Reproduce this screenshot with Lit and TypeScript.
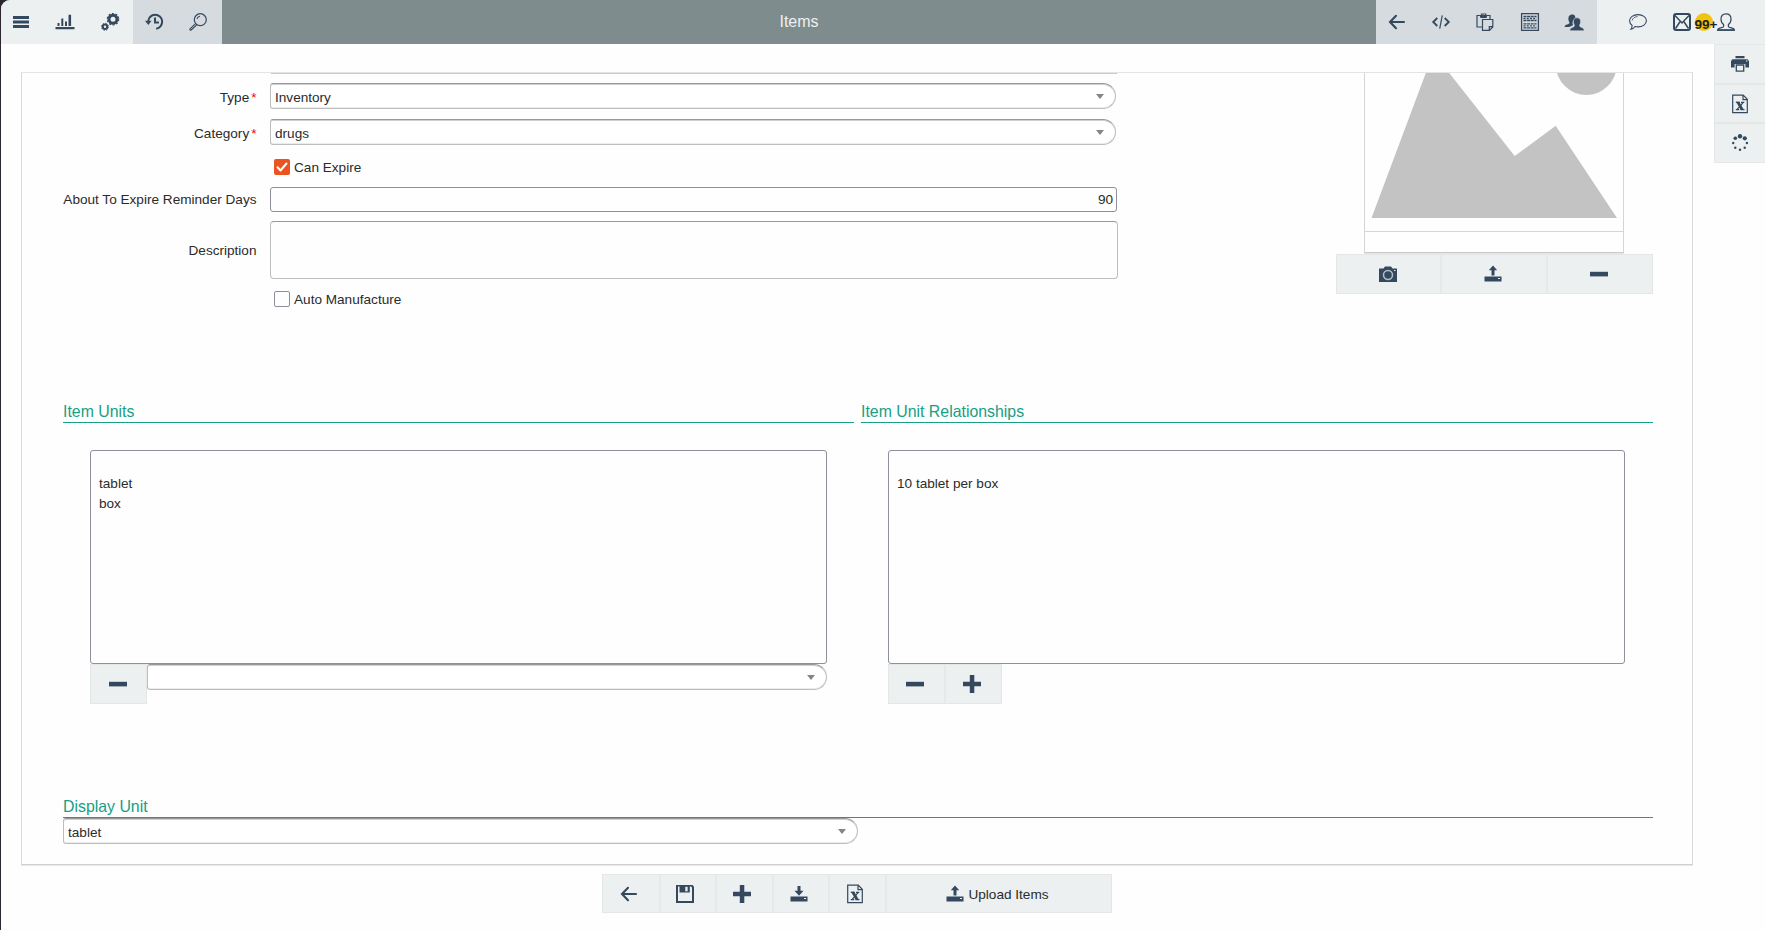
import { LitElement, html, css, svg, nothing } from "lit";
import { customElement, property } from "lit/decorators.js";

const DRIVE = svg`<path d="M.5 11.500h17v5H.5z"/><path d="M14 13.500h2" stroke="#ecf0f1" stroke-width="1"/>`;

const ICONS: Record<string, unknown> = {
  menu: svg`<path d="M1 3h16v3H1zM1 7.5h16v3H1zM1 12h16v3H1z"/>`,
  chart: svg`<path d="M-.5 14h19v2.2h-19zM1.5 10h2v3h-2zM5.3 5.500h2v7.500h-2zM9 8.500h2v4.500h-2zM12.500 1.800h2.600v11.200h-2.600z"/>`,
  gears: svg`<circle cx="12" cy="6.200" r="4" fill="none" stroke="currentColor" stroke-width="3"/><circle cx="12" cy="6.200" r="5.700" fill="none" stroke="currentColor" stroke-width="1.200" stroke-dasharray="2 1.580"/><circle cx="4" cy="13.800" r="2.200" fill="none" stroke="currentColor" stroke-width="2"/><circle cx="4" cy="13.800" r="3.500" fill="none" stroke="currentColor" stroke-width="1" stroke-dasharray="1.400 1.350"/>`,
  history: svg`<path d="M3.200 8.500a7 7 0 1 1 8 7.200" fill="none" stroke="currentColor" stroke-width="2" /><path d="M0 7.800h6.600L3.300 12zM9 4.500h2v4h3v2H9z"/>`,
  search: svg`<circle cx="11.300" cy="6.700" r="6" fill="none" stroke="currentColor" stroke-width="1.200"/><path d="M8 6a3.500 3.500 0 0 1 3-2.700M6.800 10.400L1 15.800c-.6.700.4 1.800 1.200 1.200L8 11.600" fill="none" stroke="currentColor" stroke-width="1.100"/>`,
  back: svg`<path d="M8 2.800L2 9l6 6.200M2.200 9H16" fill="none" stroke="currentColor" stroke-width="2.100" stroke-linecap="round"/>`,
  code: svg`<path d="M5.300 5L1.200 9l4.100 4M12.700 5l4.100 4-4.100 4" fill="none" stroke="currentColor" stroke-width="1.800"/><path d="M10.300 2.300L7.700 15.700" stroke="currentColor" stroke-width="1.200"/>`,
  paste: svg`<path d="M6 14H1V2.500h13v3.500M4.500 4.300h6M5.500 2.300V1h4.300v1.300M6.500 6.500h10.300V14l-3.300 3.300h-7zM16.500 13.600h-3.200v3.400" fill="none" stroke="currentColor" stroke-width="1.200"/><path d="M4 2h7v2.300H4z"/>`,
  table: svg`<path d="M.6.600h16.800v16.800H.6z" fill="none" stroke="currentColor" stroke-width="1.300"/><path d="M2.500 3.500h13M2.500 7.500h13M2.500 10.800h13M2.500 14.800h13" stroke="currentColor" stroke-width="1.300" stroke-dasharray="3 .6"/><path d="M2.500 5.500h13M2.500 12.800h13" stroke="currentColor" stroke-width="1.300" stroke-dasharray="2 1.200"/>`,
  users: svg`<path d="M7 1.500c3 0 3.600 2 3.300 4.500C8 6.500 7 9 8 12.300L4 14H-.3c0-3 4.800-2.200 4.800-4.500C2.700 7 2.800 1.500 7 1.500z" /><path d="M12 4.800c3 0 4 2.200 3.500 5-.2 1.200-.8 1.900-1 2.700 0 2.200 4.700 1.500 4.700 5.300H4.800c0-3.800 4.700-3.100 4.700-5.300-.3-.8-.8-1.500-1-2.700-.5-2.800.500-5 3.500-5z" stroke="#d6dbdf" stroke-width=".6"/>`,
  chat: svg`<path d="M9 1.600c4.700 0 8.400 2.700 8.400 6.100s-3.700 6.200-8.400 6.200c-1 0-2-.100-2.900-.4-1 1.500-2.500 2.500-4.300 2.800.9-1 1.300-2.200 1.300-3.900C1.500 11.300.6 9.700.6 7.700.600 4.300 4.300 1.600 9 1.600z" fill="none" stroke="currentColor" stroke-width="1.100"/><path d="M3.200 7.500C3.500 5.200 5.800 3.700 8.600 3.600" fill="none" stroke="currentColor" stroke-width=".8"/>`,
  mail: svg`<rect x="1" y="1" width="16" height="16" rx="2" fill="none" stroke="currentColor" stroke-width="2"/><path d="M2 2.500l7 7.500 7-7.500M2.500 15.500l4.700-7M15.500 15.500l-4.700-7" fill="none" stroke="currentColor" stroke-width="1.500"/>`,
  user: svg`<path d="M9 .8c3.300 0 5 2.200 5 5.200 0 2-.6 4.200-2.600 5.600v2c0 1.500 5.400.5 6 3.500H.6c.6-3 6-2 6-3.500v-2C4.600 10.200 4 8 4 6 4 3 5.700.800 9 .800z" fill="none" stroke="currentColor" stroke-width="1.200"/><path d="M.3 17h17.400" stroke="currentColor" stroke-width="1.500"/>`,
  print: svg`<path d="M4.500 1h9v2.200h-9zM1.500 4.200h15L18 6v6.500h-3.600V9H3.600v3.500H0V6z"/><path d="M5.300 10h7.400v6.200H5.300z" fill="none" stroke="currentColor" stroke-width="1.300"/><path d="M15 6h1.500" stroke="#ecf0f1"/>`,
  excel: svg`<path d="M1.700.2h10.500l4.100 4.100v13.300H1.700zM12 .2v4.500h4.300" fill="none" stroke="currentColor" stroke-width="1.200"/><path d="M5 6.800h3.300L13 15h-3.300z"/><path d="M12.300 7.300L6 14.600M4.800 7.300h4M10 7.300h3.300M4.800 14.600h3.400M9.500 14.600h4" stroke="currentColor" stroke-width="1.200"/>`,
  spinner: svg`<circle cx="9" cy="2.300" r="2.200"/><circle cx="13.800" cy="4.300" r="2.100"/><circle cx="4.300" cy="4.300" r="1.800"/><circle cx="15.900" cy="9" r="1.200"/><circle cx="2.200" cy="9" r="1.200"/><circle cx="13.700" cy="13.700" r="1.200"/><circle cx="4.300" cy="13.700" r="1.200"/><circle cx="9" cy="15.800" r="1.200"/>`,
  camera: svg`<path d="M0 3.500h4.500L6 1.500h6l1.500 2H18V17H0z"/><circle cx="9" cy="10" r="4.500" fill="none" stroke="#b4bec7" stroke-width="1.500"/><path d="M15 5.500h1.500" stroke="#ecf0f1"/>`,
  upload: svg`${DRIVE}<path d="M9 .5l4.200 4.700h-2.700v5.300h-3V5.200H4.800z"/>`,
  download: svg`${DRIVE}<path d="M7.500 1h3v4.800h3L9 10.800 4.500 5.800h3z"/>`,
  minus: svg`<path d="M0 6.800h18v4.600H0z"/>`,
  plus: svg`<path d="M6.800 0h4.500v6.800H18v4.500h-6.700V18H6.800v-6.700H0V6.800h6.800z"/>`,
  save: svg`<path d="M0 0h16.500L18 1.500V18H0z"/><path d="M2 1.500h1.500v6h10.300v-6H15l1 1V16H2z" fill="#ecf0f1"/><path d="M9.300 1.800h2.300v4.500H9.300z" fill="#ecf0f1"/>`,
};

@customElement("ui-icon")
class UiIcon extends LitElement {
  @property() name = "";
  static styles = css`
    :host { display: block; width: 18px; height: 18px; flex: none; color: #34495e; }
    svg { display: block; overflow: visible; fill: currentColor; }
  `;
  render() {
    return html`<svg width="18" height="18" viewBox="0 0 18 18">${ICONS[this.name]}</svg>`;
  }
}

@customElement("ui-buttons")
class UiButtons extends LitElement {
  @property({ type: Array }) icons: string[] = [];
  @property() label = "";
  static styles = css`
    :host { display: flex; box-sizing: border-box; border: 1px solid #e5e7e7; background: #ecf0f1; }
    .btn { flex: 1 1 0; box-sizing: border-box; display: flex; align-items: center; justify-content: center; gap: 4px; padding-right: 3px; }
    .btn + .btn { border-left: 2px solid #e7e8e8; }
    .btn:first-child { margin-right: -1px; }
    :host([label]) .btn { flex: 0 0 56.600px; padding-right: 4px; }
    :host([label]) .btn + .btn { padding-right: 5px; }
    :host([label]) .btn.wide { flex: 1; padding: 1px 3px 0 0; }
    :host([vertical]) { flex-direction: column; }
    :host([vertical]) .btn { padding-right: 0; margin-right: 0; }
    :host([vertical]) .btn + .btn { border-left: 0; border-top: 2px solid #e5e7e7; }
    span { padding-top: 1px; }
  `;
  render() {
    return html`${this.icons.map((n, i) => {
      const wide = this.label && i === this.icons.length - 1;
      return html`<div class="btn ${wide ? "wide" : ""}"><ui-icon name=${n}></ui-icon>${wide ? html`<span>${this.label}</span>` : nothing}</div>`;
    })}`;
  }
}

@customElement("ui-select")
class UiSelect extends LitElement {
  @property() value = "";
  static styles = css`
    :host { display: flex; align-items: center; justify-content: space-between; box-sizing: border-box; height: 26px;
      padding: 3px 11px 0 4px; background: #fff; border: 1px solid #bdbdbd; border-top-color: #999;
      border-radius: 3px 13px 13px 3px; box-shadow: inset 0 1px 0 #d0d0d0, inset 0 -1px 0 #ececec; }
    .arrow { width: 0; height: 0; margin-top: -3px; border: 4.5px solid transparent; border-top: 5px solid #858585; border-bottom: 0; }
  `;
  render() {
    return html`<span>${this.value}</span><span class="arrow"></span>`;
  }
}

@customElement("app-root")
class AppRoot extends LitElement {
  static styles = css`
    :host { display: block; box-sizing: border-box; width: 1765px; height: 930px; overflow: hidden; background: #2c2630;
      padding-left: 1px; font: 13.6px/20px "Liberation Sans", Arial, sans-serif; color: #2b2b2b; }
    .window { height: 930px; background: #fefefe; border-radius: 9px 0 0 0; overflow: hidden; display: flex; flex-direction: column; }
    .top { height: 44px; flex: none; display: flex; background: #7f8c8d; }
    .group { display: flex; align-items: center; box-sizing: border-box; }
    .light { background: #ecf0f1; }
    .mid { background: #d6dbdf; }
    .g1 { width: 132px; padding-left: 11px; gap: 26.300px; }
    .g2 { width: 89px; padding-left: 12px; gap: 26px; }
    .g3 { width: 221px; padding-left: 12px; gap: 26.200px; }
    .g4 { width: 168px; padding-left: 32px; gap: 26px; }
    .title { flex: 1; text-align: center; color: #ecf0f1; font-size: 16px; line-height: 43px; }
    .mailcell { position: relative; }
    .badge { position: absolute; left: 21.500px; top: 0; width: 18px; height: 18px; border-radius: 50%; background: #f1c40f;
      font: bold 13.600px/23px "Liberation Sans", Arial, sans-serif; color: #222; }
    .body { display: flex; align-items: flex-start; justify-content: space-between; height: 821px; }
    .panel { margin: 28px 0 0 20px; box-sizing: border-box; width: 1672px; height: 793px; border: 1px solid #d9d9d9; border-top-color: #e4e4e4;
      border-bottom-color: #cfcfcf; box-shadow: 0 1px 0 #e9e9e9; padding: 0 39px 0 41px; overflow: hidden; }
    .side { width: 52px; height: 119px; margin-right: -1px; }
    .head { display: flex; justify-content: space-between; height: 328px; }
    .form { display: grid; grid-template-columns: 193.500px 848px; column-gap: 13.500px; align-content: start; }
    .lab { text-align: right; white-space: nowrap; display: flex; justify-content: flex-end; align-items: center; }
    .req { color: #f00; margin-left: 2px; }
    .cut { height: 1px; margin: 0 1px 9px; background: #c9c9c9; grid-column: 2; }
    .row { display: grid; grid-column: 1 / 3; grid-template-columns: subgrid; margin-bottom: 10px; }
    .row ui-select { width: 846px; }
    .row .lab { padding-top: 3px; }
    .check { grid-column: 2; display: flex; align-items: center; gap: 4px; height: 16px; padding-left: 4px; line-height: 22px; }
    .check span { flex: none; }
    .check div { padding-top: 1px; }
    .box { box-sizing: border-box; width: 16px; height: 16px; border: 1px solid #8f8f9d; border-radius: 2px; }
    .on { border: 0; background: #e95420; }
    .on svg { display: block; }
    .c1 { margin: 4px 0 12px; }
    .num { box-sizing: border-box; width: 847px; height: 25px; border: 1px solid #8f8f9d; border-radius: 3px; text-align: right; padding-right: 3px; line-height: 24px; }
    .numrow { margin-bottom: 9px; }
    .row.numrow .lab { padding: 0; }
    .area { box-sizing: border-box; height: 58px; border: 1px solid #bdbdbd; border-top-color: #999; border-radius: 4px; }
    .arearow { margin-bottom: 12px; }
    .row.arearow .lab { padding-top: 1px; }
    .media { width: 317px; }
    .frame { margin-left: 28px; width: 258px; height: 179px; border: 1px solid #d5d5d5; border-top: 0; border-bottom-color: #c9c9c9; box-shadow: 0 1px 0 #e6e6e6; }
    .pic { display: block; border-bottom: 1px solid #d5d5d5; }
    .media ui-buttons { height: 40px; margin-top: 1px; }
    .h { box-sizing: border-box; font-size: 15.870px; line-height: 20px; height: 22px; padding-top: 1px; border-bottom: 1px solid #16a085; color: #16a085; }
    .units { display: grid; grid-template-columns: 791px 792px; gap: 7px; height: 395px; }
    .inner { width: 737px; margin: 27px 0 0 27px; }
    .list { box-sizing: border-box; height: 214px; border: 1px solid #8f8f9d; border-radius: 3px; padding: 23px 8px 0; }
    .tools { display: flex; align-items: flex-start; height: 40px; }
    .one { width: 57px; height: 40px; }
    .two { width: 114px; height: 40px; }
    .tools ui-select { flex: 1; }
    .display ui-select { width: 795px; }
    .bottom { width: 510px; height: 39px; margin: 9px 0 0 601px; }
  `;

  icons(names: string[]) {
    return names.map((n) => html`<ui-icon name=${n}></ui-icon>`);
  }

  render() {
    return html`
      <div class="window">
        <header class="top">
          <div class="group light g1">${this.icons(["menu", "chart", "gears"])}</div>
          <div class="group mid g2">${this.icons(["history", "search"])}</div>
          <div class="title">Items</div>
          <div class="group mid g3">${this.icons(["back", "code", "paste", "table", "users"])}</div>
          <div class="group light g4">
            <ui-icon name="chat"></ui-icon>
            <div class="mailcell"><ui-icon name="mail"></ui-icon><div class="badge">99+</div></div>
            <ui-icon name="user"></ui-icon>
          </div>
        </header>
        <div class="body">
          <main class="panel">
            <section class="head">
              <div class="form">
                <div class="cut"></div>
                <div class="row"><div class="lab">Type<span class="req">*</span></div><ui-select value="Inventory"></ui-select></div>
                <div class="row"><div class="lab">Category<span class="req">*</span></div><ui-select value="drugs"></ui-select></div>
                <div class="check c1">
                  <span class="box on"><svg width="16" height="16" viewBox="0 0 16 16"><path d="M3.500 8.300l3 3.200 6-7" fill="none" stroke="#fff" stroke-width="2" stroke-linecap="round" stroke-linejoin="round"/></svg></span><div>Can Expire</div>
                </div>
                <div class="row numrow"><div class="lab">About To Expire Reminder Days</div><div class="num">90</div></div>
                <div class="row arearow"><div class="lab">Description</div><div class="area"></div></div>
                <div class="check"><span class="box"></span><div>Auto Manufacture</div></div>
              </div>
              <div class="media">
                <div class="frame">
                  <svg class="pic" width="258" height="158" viewBox="1365 73 258 158">
                    <path d="M1371.500 218L1426 72.500V60H1439L1514.700 156l41-30.300L1617 218z" fill="#c3c3c3"/>
                    <circle cx="1586.300" cy="64.600" r="30.400" fill="#c3c3c3"/>
                  </svg>
                </div>
                <ui-buttons .icons=${["camera", "upload", "minus"]}></ui-buttons>
              </div>
            </section>
            <section class="units">
              <div class="col">
                <div class="h">Item Units</div>
                <div class="inner">
                  <div class="list"><div>tablet</div><div>box</div></div>
                  <div class="tools"><ui-buttons class="one" .icons=${["minus"]}></ui-buttons><ui-select></ui-select></div>
                </div>
              </div>
              <div class="col">
                <div class="h">Item Unit Relationships</div>
                <div class="inner">
                  <div class="list"><div>10 tablet per box</div></div>
                  <div class="tools"><ui-buttons class="two" .icons=${["minus", "plus"]}></ui-buttons></div>
                </div>
              </div>
            </section>
            <section class="display">
              <div class="h">Display Unit</div>
              <ui-select value="tablet"></ui-select>
            </section>
          </main>
          <ui-buttons class="side" vertical .icons=${["print", "excel", "spinner"]}></ui-buttons>
        </div>
        <ui-buttons class="bottom" label="Upload Items" .icons=${["back", "save", "plus", "download", "excel", "upload"]}></ui-buttons>
      </div>
    `;
  }
}
